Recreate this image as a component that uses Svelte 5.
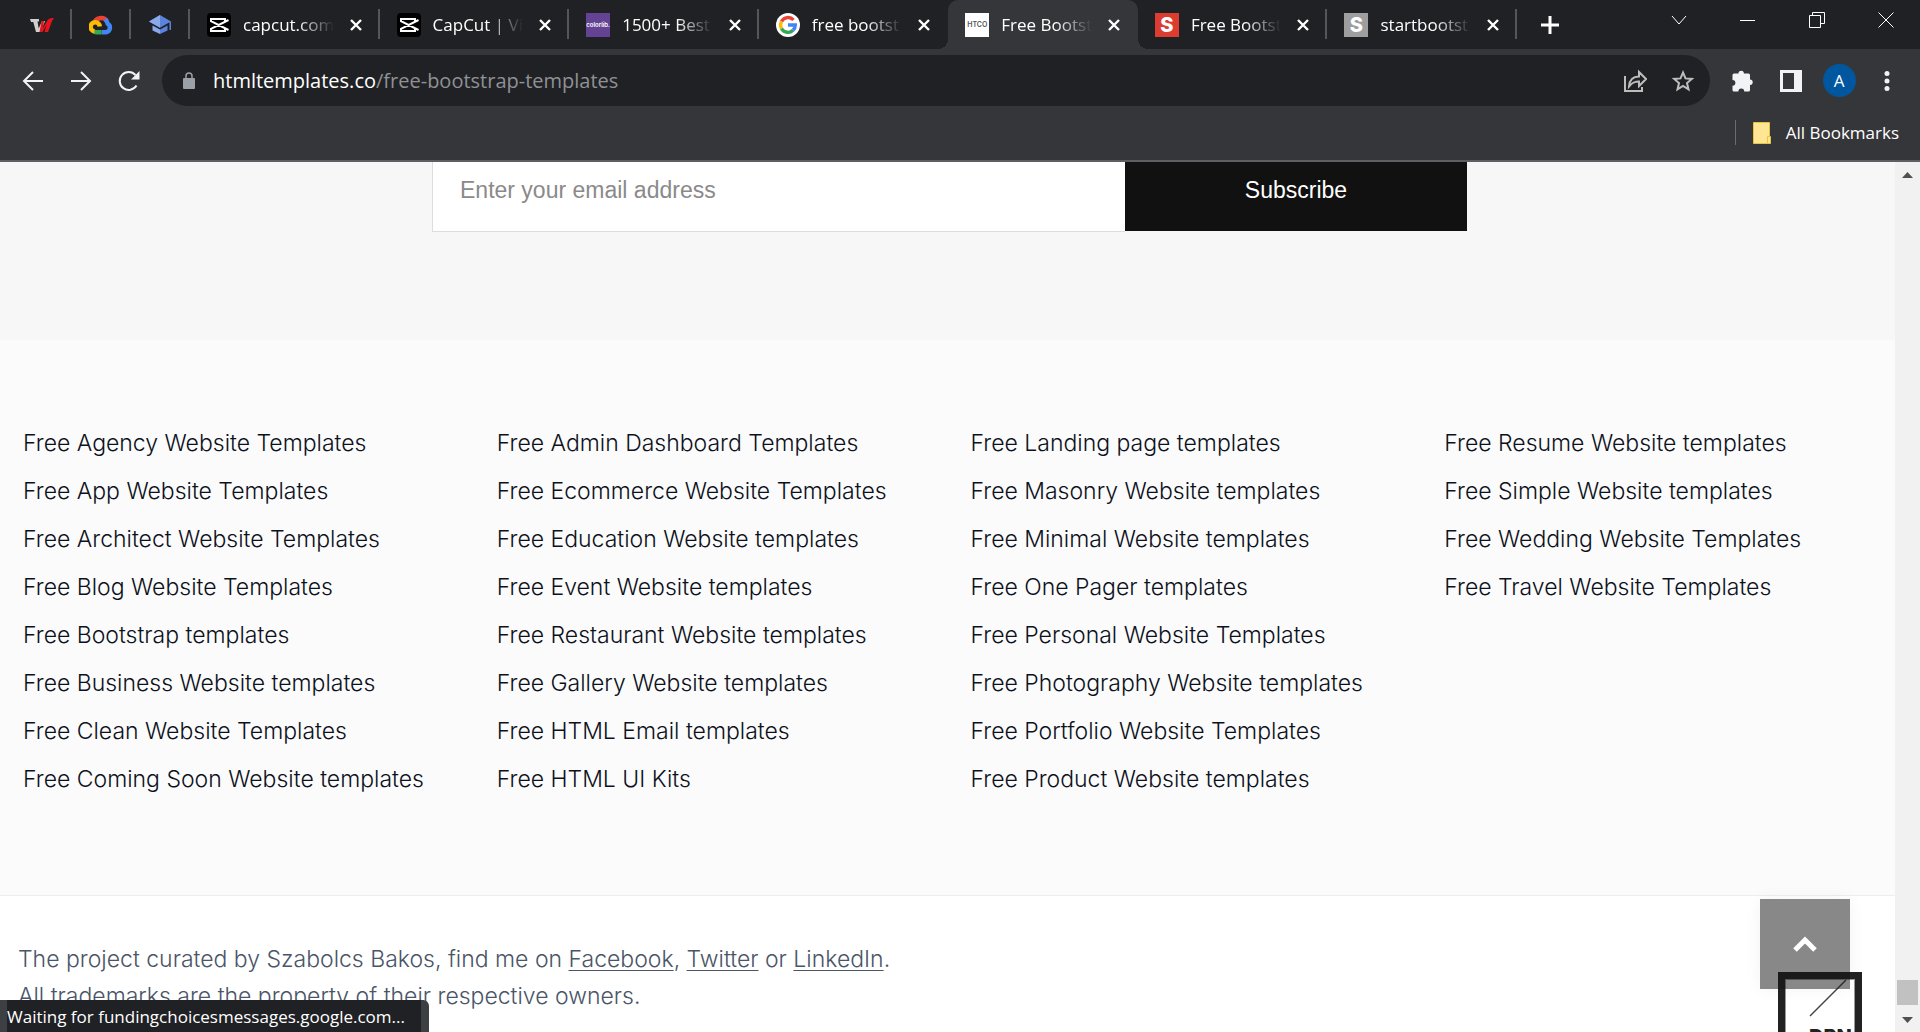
<script>
  const pinned = ['w', 'cloud', 'cap'];
  const tabs = [
    { icon: 'capcut', title: 'capcut.com' },
    { icon: 'capcut', title: 'CapCut | Vi' },
    { icon: 'colorlib', title: '1500+ Best' },
    { icon: 'google', title: 'free bootst' },
    { icon: 'htco', title: 'Free Bootst', active: true },
    { icon: 'red', title: 'Free Bootst' },
    { icon: 'grey', title: 'startbootst' }
  ];
  const columns = [
    ['Free Agency Website Templates', 'Free App Website Templates', 'Free Architect Website Templates', 'Free Blog Website Templates', 'Free Bootstrap templates', 'Free Business Website templates', 'Free Clean Website Templates', 'Free Coming Soon Website templates'],
    ['Free Admin Dashboard Templates', 'Free Ecommerce Website Templates', 'Free Education Website templates', 'Free Event Website templates', 'Free Restaurant Website templates', 'Free Gallery Website templates', 'Free HTML Email templates', 'Free HTML UI Kits'],
    ['Free Landing page templates', 'Free Masonry Website templates', 'Free Minimal Website templates', 'Free One Pager templates', 'Free Personal Website Templates', 'Free Photography Website templates', 'Free Portfolio Website Templates', 'Free Product Website templates'],
    ['Free Resume Website templates', 'Free Simple Website templates', 'Free Wedding Website Templates', 'Free Travel Website Templates']
  ];
</script>

{#snippet favicon(name)}
  {#if name === 'w'}
    <svg width="24" height="24" viewBox="0 0 24 24" aria-hidden="true">
      <path d="M0 6h9v2.500H7.500l1.200 7L12 8h3l-4.500 11H6L3.300 9H1z" fill="#cfcfcf" />
      <path d="M11.500 8H14l-1 7 5-8.500c2-1.500 4-1.500 6-1.500l-2 3-4 11h-3.500l2-7-4 7h-3z" fill="#e8141c" />
    </svg>
  {:else if name === 'cloud'}
    <svg width="24" height="24" viewBox="0 0 24 24" fill="none" stroke-width="4.500" aria-hidden="true">
      <path d="M5 10.500A7.400 7.400 0 0 1 18 8" stroke="#ea4335" />
      <path d="M16 6.500c2 1.500 2.500 3 2.700 4.200A4.700 4.700 0 0 1 17 19.300h-4.500" stroke="#4285f4" />
      <path d="M12.500 19.300H7.500a4.600 4.600 0 0 1-3-1" stroke="#34a853" />
      <path d="M5.500 18.400A4.600 4.600 0 1 1 10.800 13.500" stroke="#fbbc05" />
    </svg>
  {:else if name === 'cap'}
    <svg width="24" height="24" viewBox="0 0 24 24" aria-hidden="true">
      <path d="M12 2L1 8.500l11 6.200 9.500-5.400V17H23V8.500z" fill="#5b83dc" />
      <path d="M12 2L1 8.500l11 6.200z" fill="#8aa9ea" />
      <path d="M4.500 12.500v5L12 21v-4.500z" fill="#8aa9ea" />
      <path d="M19.500 12.500v5L12 21v-4.500z" fill="#5b83dc" />
    </svg>
  {:else if name === 'capcut'}
    <svg width="24" height="24" viewBox="0 0 24 24" aria-hidden="true">
      <rect width="24" height="24" rx="4" fill="#000" />
      <path d="M21.500 7L4 15.800V18h14v-2.200M21.500 17L4 8.200V6h14v2.200" fill="none" stroke="#fff" stroke-width="2" />
    </svg>
  {:else if name === 'google'}
    <svg width="24" height="24" viewBox="0 0 24 24" fill="none" stroke-width="3.400" aria-hidden="true">
      <circle cx="12" cy="12" r="12" fill="#fff" />
      <path d="M5.500 8.500A7.300 7.300 0 0 1 17.500 7" stroke="#ea4335" />
      <path d="M5.500 15.500A7.300 7.300 0 0 1 5.500 8.500" stroke="#fbbc05" />
      <path d="M17 17.300A7.300 7.300 0 0 1 5.500 15.500" stroke="#34a853" />
      <path d="M12 12h7.300a7.300 7.300 0 0 1-2.300 5.300" stroke="#4285f4" />
    </svg>
  {:else}
    <span class="fav {name}" aria-hidden="true">{name === 'colorlib' ? 'colorlib.' : name === 'htco' ? 'HTCO' : 'S'}</span>
  {/if}
{/snippet}

<div class="window">
  <header>
    <div class="strip">
      <nav class="pins" aria-label="Pinned tabs">
        {#each pinned as p}
          <button class="pin" aria-label={p}>{@render favicon(p)}</button>
        {/each}
      </nav>
      <nav class="tabs" aria-label="Open tabs">
        {#each tabs as t, i}
          <div class="tab" class:active={t.active} class:plain={tabs[i + 1]?.active}>
            {@render favicon(t.icon)}
            <span class="title">{t.title}</span>
            <button class="close" aria-label="Close tab">
              <svg width="12" height="12" viewBox="0 0 12 12"><path d="M1 1l10 10M11 1L1 11" stroke="#fff" stroke-width="2.400" /></svg>
            </button>
          </div>
        {/each}
      </nav>
      <button class="newtab" aria-label="New tab">
        <svg width="18" height="18" viewBox="0 0 18 18"><path d="M9 0v18M0 9h18" stroke="#fff" stroke-width="3" /></svg>
      </button>
      <div class="controls">
        <button aria-label="Search tabs"><svg width="16" height="16" viewBox="0 0 16 16"><path d="M1 4l7 8 7-8" /></svg></button>
        <button aria-label="Minimize"><svg width="16" height="16" viewBox="0 0 16 16"><path d="M0 8.500h15" /></svg></button>
        <button aria-label="Restore"><svg width="16" height="16" viewBox="0 0 16 16"><path d="M.5 3.500h11v12H.5zM3.500 3.500V.5h12v11h-4" /></svg></button>
        <button aria-label="Close"><svg width="16" height="16" viewBox="0 0 16 16"><path d="M.5.5l15 15M15.500.5l-15 15" /></svg></button>
      </div>
    </div>

    <div class="toolbar">
      <button class="tool" aria-label="Back"><svg width="22" height="22" viewBox="0 0 22 22"><path d="M21 11H2M11 2L2 11l9 9" /></svg></button>
      <button class="tool" aria-label="Forward"><svg width="22" height="22" viewBox="0 0 22 22"><path d="M1 11h19M11 2l9 9-9 9" /></svg></button>
      <button class="tool" aria-label="Reload">
        <svg width="22" height="22" viewBox="0 0 22 22"><path d="M18.500 15.500A9 9 0 1 1 17.500 5" /><path d="M21.500 1v8.500H13z" fill="#f1f3f4" stroke="none" /></svg>
      </button>
      <div class="omnibox">
        <svg width="14" height="18" viewBox="0 0 14 18" aria-hidden="true"><rect x="1" y="6" width="12" height="11" rx="1" fill="#9aa0a6" /><path d="M4 7V4a3 3 0 0 1 6 0v3" fill="none" stroke="#9aa0a6" stroke-width="1.500" /></svg>
        <a class="url" href="#top"><b>htmltemplates.co</b>/free-bootstrap-templates</a>
        <button class="tool soft" aria-label="Share">
          <svg width="24" height="24" viewBox="0 0 24 24"><path d="M2 7v15h17v-4M6 17.500c.5-7 4-10 10-10V3l7 7-7 7v-4.500c-5 0-7 1.500-10 5z" /></svg>
        </button>
        <button class="tool soft" aria-label="Bookmark">
          <svg width="24" height="24" viewBox="0 0 24 24"><path d="M12 3.500l2.500 5.900 6.400.5-4.900 4.200 1.500 6.300-5.500-3.400-5.500 3.400L8 14.100 3.100 9.900l6.400-.5z" /></svg>
        </button>
      </div>
      <button class="tool" aria-label="Extensions">
        <svg width="22" height="22" viewBox="0 0 22 22"><path d="M6.500 3.500a2.700 2.700 0 0 1 5.400 0h4.600a1.500 1.500 0 0 1 1.500 1.500v4.500a2.700 2.700 0 0 1 0 5.400V20a1.500 1.500 0 0 1-1.500 1.500h-4.300a2.900 2.900 0 0 0-5.800 0H2A1.500 1.500 0 0 1 .5 20v-4.300a2.900 2.900 0 0 0 0-5.800V5A1.500 1.500 0 0 1 2 3.500z" fill="#f1f3f4" stroke="none" /></svg>
      </button>
      <button class="tool" aria-label="Side panel">
        <svg width="22" height="22" viewBox="0 0 22 22"><path fill-rule="evenodd" d="M0 0h22v22H0zM3 3v16h11V3z" fill="#f1f3f4" stroke="none" /></svg>
      </button>
      <button class="tool" aria-label="Profile"><span class="avatar">A</span></button>
      <button class="tool" aria-label="Menu">
        <svg width="6" height="20" viewBox="0 0 6 20"><g fill="#f1f3f4" stroke="none"><circle cx="3" cy="2.500" r="2.500" /><circle cx="3" cy="10" r="2.500" /><circle cx="3" cy="17.500" r="2.500" /></g></svg>
      </button>
    </div>

    <div class="bookmarks">
      <button class="all">
        <svg width="18" height="22" viewBox="0 0 18 22" aria-hidden="true"><path d="M.5.500h16v21H.5z" fill="#ffe694" stroke="#e8c33f" /><path d="M14.500 21.500v-7h3v7z" fill="#ffe694" stroke="#e8c33f" /></svg>
        All Bookmarks
      </button>
    </div>
  </header>

  <div class="viewport">
    <main id="top">
      <form class="subscribe" onsubmit={(e) => e.preventDefault()}>
        <input type="email" aria-label="Email address" placeholder="Enter your email address" />
        <button>Subscribe</button>
      </form>
      <section class="links">
        {#each columns as col}
          <ul>
            {#each col as item}
              <li><a href="#top">{item}</a></li>
            {/each}
          </ul>
        {/each}
      </section>
      <footer>
        <p>The project curated by Szabolcs Bakos, find me on <a href="#top">Facebook</a>, <a href="#top">Twitter</a> or <a href="#top">LinkedIn</a>.</p>
        <p>All trademarks are the property of their respective owners.</p>
      </footer>
    </main>
    <div class="scrollbar" aria-hidden="true">
      <svg width="11" height="6" viewBox="0 0 11 6"><path d="M0 6l5.500-6L11 6z" fill="#505050" /></svg>
      <div class="thumb"></div>
      <svg width="11" height="6" viewBox="0 0 11 6"><path d="M0 0l5.500 6L11 0z" fill="#505050" /></svg>
    </div>
  </div>

  <a class="badge" href="#top" aria-label="DPN">
    <svg width="38" height="38" viewBox="0 0 38 38" aria-hidden="true"><path d="M1 37L37 1" stroke="#444" stroke-width="1.500" /></svg>
    <span>DPN</span>
  </a>
  <button class="totop" aria-label="Back to top">
    <svg width="26" height="18" viewBox="0 0 26 18"><path d="M3 15l10-10 10 10" fill="none" stroke="#fff" stroke-width="5" /></svg>
  </button>
  <div class="status">Waiting for fundingchoicesmessages.google.com...</div>
</div>

<style>
  :global(body) { margin: 0; }
  .window {
    position: relative;
    display: flex;
    flex-direction: column;
    height: 100vh;
    overflow: hidden;
    font-family: "Open Sans", "Noto Sans", sans-serif;
  }
  button { border: 0; padding: 0; background: none; font: inherit; color: inherit; display: flex; align-items: center; justify-content: center; }
  svg { flex: none; display: block; }
  header { background: #35363a; color: #fff; border-bottom: 2px solid #5f5e63; }

  .strip { display: flex; align-items: stretch; height: 49px; background: #202124; padding-left: 13px; }
  .pins { display: flex; }
  .pin { position: relative; box-sizing: border-box; width: 59px; padding-right: 2px; }
  .pin::after, .tab::after {
    content: "";
    position: absolute;
    right: 0;
    top: 9px;
    width: 2px;
    height: 30px;
    background: #55565a;
  }
  .tabs { display: flex; flex: 1; max-width: 1327px; }
  .tab { position: relative; flex: 1 1 0; min-width: 0; display: flex; align-items: center; padding: 0 18px 0 17px; }
  .tab.active { background: #35363a; border-radius: 10px 10px 0 0; }
  .tab.active::before, .tab.active::after {
    content: "";
    position: absolute;
    top: auto;
    bottom: 0;
    width: 10px;
    height: 10px;
  }
  .tab.active::before { right: 100%; background: radial-gradient(circle at 0 0, transparent 10px, #35363a 10px); }
  .tab.active::after { right: auto; left: 100%; background: radial-gradient(circle at 100% 0, transparent 10px, #35363a 10px); }
  .tab.plain::after { display: none; }
  .title {
    flex: 1;
    min-width: 0;
    margin: 0 16px 0 12px;
    overflow: hidden;
    white-space: nowrap;
    font-size: 17px;
    line-height: 24px;
    mask-image: linear-gradient(to right, #000 60%, transparent);
  }
  .fav { flex: none; width: 24px; height: 24px; line-height: 24px; text-align: center; overflow: hidden; font-family: Inter, sans-serif; font-weight: 800; font-size: 20px; color: #fff; }
  .colorlib { background: #654394; font-size: 6px; font-weight: 600; }
  .htco { background: #fff; color: #555; font-size: 7px; font-weight: 600; }
  .red { background: #dd3d31; }
  .grey { background: #9e9e9e; }
  .newtab { width: 66px; }
  .controls { display: flex; margin-left: auto; padding-bottom: 10px; }
  .controls button { width: 69px; }
  .controls svg { fill: none; stroke: #fff; stroke-width: 1; }

  .toolbar { display: flex; align-items: center; padding: 6px 9px 0; }
  .tool { flex: none; width: 48px; height: 48px; }
  .tool svg { fill: none; stroke: #f1f3f4; stroke-width: 2; }
  .tool.soft svg { stroke: #bdbdbd; }
  .omnibox { flex: 1; display: flex; align-items: center; height: 51px; margin: 0 9px; padding: 0 3px 0 20px; border-radius: 26px; background: #202124; }
  .url { flex: 1; margin-left: 17px; color: #8f9195; font-size: 20px; line-height: 28px; text-decoration: none; white-space: nowrap; }
  .url b { font-weight: 400; color: #fff; }
  .avatar { width: 33px; height: 33px; border-radius: 50%; background: #00579f; font-size: 17px; line-height: 33px; text-align: center; }
  .bookmarks { display: flex; justify-content: flex-end; padding: 14px 21px 15px; }
  .all { height: 25px; gap: 15px; padding-left: 17px; border-left: 1px solid #6b6c70; font-size: 17px; line-height: 24px; }

  .viewport { flex: 1; min-height: 0; display: flex; }
  main { flex: 1; min-width: 0; overflow: hidden; background: #fff; font-family: Inter, sans-serif; font-weight: 300; font-size: 23px; font-optical-sizing: none; }
  .subscribe { display: flex; justify-content: center; padding: 0 428px 108px 432px; background: #f7f7f7; font-family: "Liberation Sans", Arial, sans-serif; font-weight: 400; }
  .subscribe input { flex: 2; min-width: 0; box-sizing: border-box; height: 70px; border: 1px solid #ddd; border-width: 0 0 1px 1px; padding: 0 28px 12px 27px; background: #fff; font: inherit; }
  .subscribe input::placeholder { color: #8a8a8a; opacity: 1; }
  .subscribe button { width: 342px; height: 69px; padding-bottom: 13px; background: #111; color: #fff; }
  .links { display: grid; grid-template-columns: repeat(4, 1fr); padding: 79px 0 92px; background: #fbfbfb; border-bottom: 1px solid #eee; }
  ul { list-style: none; margin: 0; padding: 0 0 0 23px; }
  li { line-height: 48px; white-space: nowrap; }
  li a { color: #0d111c; text-decoration: none; }
  footer { padding: 45px 18px; color: #4a5568; line-height: 37px; }
  footer p { margin: 0; }
  footer a { color: inherit; text-underline-offset: 3px; text-decoration-thickness: 1px; }

  .scrollbar { display: flex; flex-direction: column; align-items: center; box-sizing: border-box; width: 25px; padding: 10px 0 9px; background: #f1f1f1; }
  .thumb { width: 21px; height: 25px; margin: auto 0 12px; background: #c1c1c1; }

  .totop { position: absolute; right: 70px; bottom: 43px; width: 90px; height: 90px; background: rgba(17, 17, 17, 0.5); box-shadow: 0 0 16px rgba(0, 0, 0, 0.05); }
  .badge { position: absolute; right: 58px; bottom: -24px; box-sizing: border-box; width: 84px; height: 84px; border: 7px solid #222; background: #fff; box-shadow: inset 0 0 0 1px #999; overflow: hidden; color: #222; text-decoration: none; }
  .badge svg { margin-left: 24px; }
  .badge span { display: block; margin-left: 24px; font: 800 20px/24px Inter, sans-serif; margin-top: 8px; }
  .status { position: absolute; left: 0; bottom: 0; height: 32px; border: solid #3c4043; border-width: 0 8px 0 7px; padding-right: 16px; background: #202124; color: #fff; font-size: 17px; line-height: 34px; white-space: nowrap; border-top-right-radius: 6px; }
</style>
